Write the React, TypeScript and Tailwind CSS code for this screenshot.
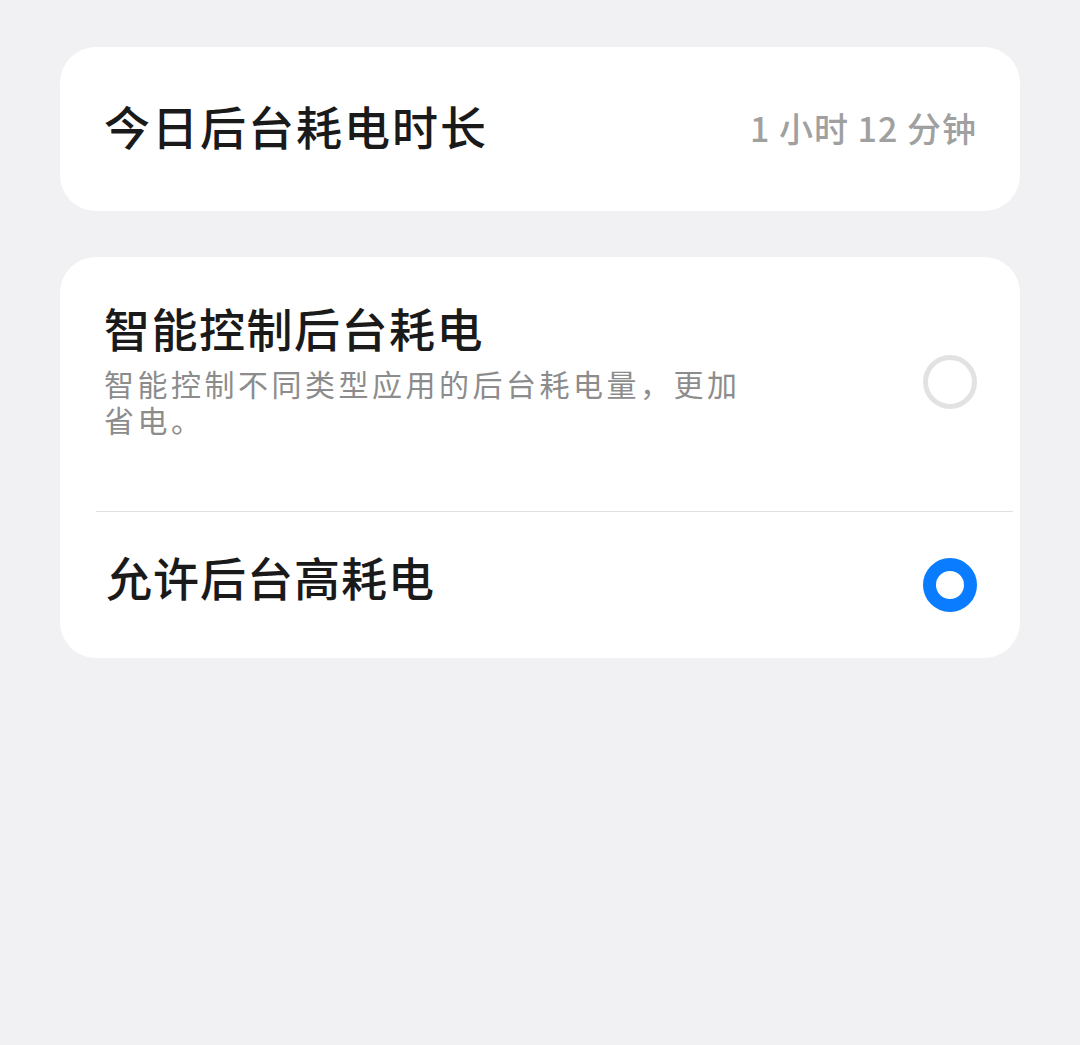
import React from "react";

const font = { fontFamily: '"Noto Sans CJK SC", "Noto Sans", sans-serif' };

function Radio({ checked }: { checked: boolean }) {
  return checked ? (
    <div className="w-[54px] h-[54px] rounded-full border-[13px] border-[#0a7cff] bg-white shrink-0" />
  ) : (
    <div className="w-[54px] h-[54px] rounded-full border-[5px] border-[#e2e2e2] bg-white shrink-0" />
  );
}

export default function App() {
  return (
    <div
      className="w-[1080px] h-[1045px] bg-[#f1f1f3] px-[60px] pt-[47px] flex flex-col gap-[46px]"
      style={font}
    >
      {/* 今日耗电 */}
      <div className="bg-white rounded-[36px] h-[164px] pl-[44px] pr-[43px] flex items-center justify-between">
        <span className="text-[46px] leading-[56px] font-medium text-[#1a1a1a] tracking-[2px] -mt-[8px]">
          今日后台耗电时长
        </span>
        <span className="text-[34px] leading-[40px] font-medium text-[#a0a0a0] tracking-[1px] -mt-[2px]">
          1 小时 12 分钟
        </span>
      </div>

      {/* 选项 */}
      <div className="bg-white rounded-[36px] flex flex-col">
        <div className="flex items-start justify-between pl-[44px] pr-[43px] pt-[42px] pb-[74px]">
          <div className="flex flex-col">
            <span className="text-[46px] leading-[56px] font-medium text-[#1a1a1a] tracking-[1.5px]">
              智能控制后台耗电
            </span>
            <p className="text-[30px] leading-[36px] text-[#8c8c8c] tracking-[3.5px] w-[650px] mt-[10px]">
              智能控制不同类型应用的后台耗电量，更加省电。
            </p>
          </div>
          <div className="mt-[56px]">
            <Radio checked={false} />
          </div>
        </div>
        <div className="h-px bg-[#e1e1e1] ml-[36px] mr-[7px]" />
        <div className="flex items-center justify-between pl-[46px] pr-[43px] h-[146px]">
          <span className="text-[46px] leading-[56px] font-medium text-[#1a1a1a] tracking-[1px] -mt-[18px]">
            允许后台高耗电
          </span>
          <Radio checked={true} />
        </div>
      </div>
    </div>
  );
}
